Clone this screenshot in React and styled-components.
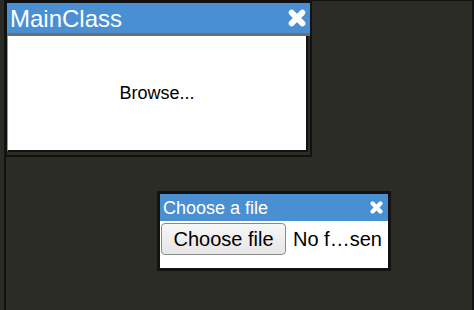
import React from "react";
import styled, { createGlobalStyle } from "styled-components";

const Global = createGlobalStyle`
  html, body { margin: 0; padding: 0; background: #2b2c26; overflow: hidden; }
  body { font-family: "Liberation Sans", Arial, sans-serif; }
`;

const Desktop = styled.div`
  position: relative;
  margin-left: 4px;
  width: 466px;
  height: 309px;
  background: #2b2c26;
  border-left: 2px solid #121212;
  border-right: 2px solid #121212;
  border-top: 1px solid #121212;
`;

const Win = styled.div`
  position: absolute;
  left: ${(p) => p.$x}px;
  top: ${(p) => p.$y}px;
  width: ${(p) => p.$w}px;
  height: ${(p) => p.$h}px;
  box-sizing: border-box;
  border: ${(p) => p.$bw}px solid #121212;
  background: ${(p) => p.$bg};
  display: flex;
  flex-direction: column;
`;

const TitleBar = styled.div`
  flex: none;
  height: ${(p) => p.$h}px;
  background: #4a8fd1;
  color: #fff;
  display: flex;
  align-items: center;
  justify-content: space-between;
  padding: 0 ${(p) => p.$pr}px 0 3px;
  font-size: ${(p) => p.$fs}px;
  border-bottom: ${(p) => (p.$sep ? "3px solid #6f6f6f" : "none")};
`;

const TitleText = styled.span`
  line-height: 1;
  margin-top: ${(p) => p.$mt || 0}px;
`;

const MainBody = styled.div`
  flex: none;
  height: 114px;
  margin-right: 2px;
  border-left: 1px solid #9a9a9a;
  border-right: 2px solid #121212;
  border-bottom: 2px solid #121212;
  background: #fff;
  display: flex;
  align-items: center;
  justify-content: center;
  font-size: 18px;
  color: #000;
`;

const FileBody = styled.div`
  flex: 1;
  background: #fff;
  display: flex;
  align-items: flex-start;
  padding: 2px 0 0 1px;
  gap: 7px;
  font-size: 20px;
  color: #000;
`;

const FakeButton = styled.div`
  box-sizing: border-box;
  width: 125px;
  height: 32px;
  border: 1px solid #8a8a8a;
  border-radius: 4px;
  background: linear-gradient(#f7f7f7, #e6e6e6);
  display: flex;
  align-items: center;
  justify-content: center;
  font-size: 20px;
`;

const Status = styled.span`
  line-height: 32px;
`;

const CloseIcon = ({ size }) => (
  <svg width={size} height={size} viewBox="0 0 20 20" style={{ display: "block" }}>
    <g stroke="#fff" strokeWidth="6.5" strokeLinecap="round">
      <line x1="4" y1="4" x2="16" y2="16" />
      <line x1="16" y1="4" x2="4" y2="16" />
    </g>
  </svg>
);

export default function App() {
  return (
    <>
      <Global />
      <Desktop>
        <Win $x={-1} $y={0} $w={307} $h={156} $bw={2} $bg="#2b2c26">
          <TitleBar $h={30} $fs={24} $pr={4} $sep>
            <TitleText $mt={1}>MainClass</TitleText>
            <CloseIcon size={18} />
          </TitleBar>
          <MainBody>Browse...</MainBody>
        </Win>
        <Win $x={151} $y={190} $w={234} $h={80} $bw={3} $bg="#fff">
          <TitleBar $h={27} $fs={18} $pr={5}>
            <TitleText>Choose a file</TitleText>
            <CloseIcon size={13} />
          </TitleBar>
          <FileBody>
            <FakeButton>Choose file</FakeButton>
            <Status>No f…sen</Status>
          </FileBody>
        </Win>
      </Desktop>
    </>
  );
}
